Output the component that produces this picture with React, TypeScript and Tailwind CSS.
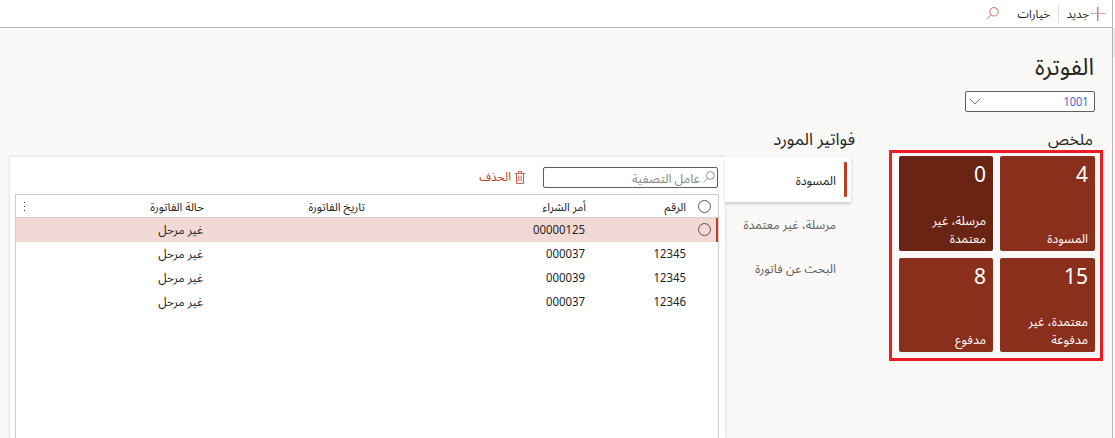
import React from "react";

const tabs = [
  { label: "المسودة", active: true },
  { label: "مرسلة، غير معتمدة", active: false },
  { label: "البحث عن فاتورة", active: false },
];

const tiles = [
  { count: "4", label: "المسودة", tone: "bg-[#8a2f1c]" },
  { count: "0", label: "مرسلة، غير معتمدة", tone: "bg-[#692414]" },
  { count: "15", label: "معتمدة، غير مدفوعة", tone: "bg-[#8a2f1c]" },
  { count: "8", label: "مدفوع", tone: "bg-[#8a2f1c]" },
];

const rows = [
  { number: "", order: "00000125", status: "غير مرحل", selected: true },
  { number: "12345", order: "000037", status: "غير مرحل", selected: false },
  { number: "12345", order: "000039", status: "غير مرحل", selected: false },
  { number: "12346", order: "000037", status: "غير مرحل", selected: false },
];

function SearchIcon({ className }: { className: string }) {
  return (
    <svg viewBox="0 0 13 13" className={className} fill="none" stroke="currentColor" strokeWidth="1">
      <circle cx="8" cy="4.8" r="4.2" />
      <path d="M5.1 7.700 0.5 12.3" />
    </svg>
  );
}

function TrashIcon() {
  return (
    <svg viewBox="0 0 10 13" className="h-[13px] w-[10px]" fill="none" strokeWidth="1">
      <path d="M0 2.500h10M3.5 2.500v-2h3v2M1.5 2.500v10h7v-10" stroke="#bf6350" />
      <path d="M3.5 4.500v6M5 4.500v6M6.500 4.500v6" stroke="#c07a70" strokeWidth="0.8" />
    </svg>
  );
}

function Circle() {
  return <span className="size-[13px] rounded-full border border-[#555]" />;
}

export default function App() {
  return (
    <div
      dir="rtl"
      className="flex h-[438px] w-[1115px] overflow-hidden bg-[#faf9f8] font-['Segoe_UI','Noto_Sans_Arabic','Open_Sans','DejaVu_Sans',sans-serif] text-[12px] whitespace-nowrap text-[#252423]"
    >
      <div className="flex w-[3px] shrink-0 flex-col border-l border-[#b5b5b5]">
        <div className="h-[28px] bg-white" />
        <div className="h-[29px] bg-[#edebe9]" />
      </div>
      <div className="flex w-[1112px] shrink-0 flex-col">
        <header className="flex h-[28px] shrink-0 items-center border-b border-[#b8b8b8] bg-white pr-[7px] text-[11.5px]">
          <svg viewBox="0 0 14 14" className="size-[14px]" strokeWidth="1" fill="none">
            <path d="M7.500 0v14" stroke="#c9c3ec" />
            <path d="M0 6.500h14" stroke="#d3a3a0" />
            <path d="M6.500 0v14" stroke="#d98b33" />
          </svg>
          <span className="mr-[2px] flex w-[30px] pt-[3px]">جديد</span>
          <span className="h-[18px] w-px bg-[#dcdcdc]" />
          <span className="mr-[8px] flex w-[51px] pt-[3px]">خيارات</span>
          <SearchIcon className="size-[13px] text-[#c97464]" />
        </header>

        <div className="flex flex-col pr-[18px]">
          <h1 className="mt-[20px] flex h-[40px] items-center text-[23.400px] leading-[40px]">الفوترة</h1>
          <div className="mt-[3px] mr-[-1px] flex h-[21px] w-[130px] items-center justify-between rounded-[2px] border border-[#605e5c] bg-white pr-[5px] pl-[4px] text-[#4663d0]">
            <span className="origin-right scale-x-[0.880] pt-px text-[12.500px]">1001</span>
            <svg viewBox="0 0 12 7" className="h-[7px] w-[12px] -translate-x-px" fill="none" stroke="#777">
              <path d="m.7.7 5.300 5.300L11.300.7" />
            </svg>
          </div>
        </div>

        <div className="flex flex-1 pr-[9px]">
          <section className="w-[214px] shrink-0">
            <h2 className="mr-[10px] flex h-[38px] items-center pt-[18px] text-[16px]">ملخص</h2>
            <div className="grid h-[211px] grid-cols-[95px_94px] grid-rows-[95px_94px] gap-[7px] border-[3px] border-[#ed1c24] pt-[3px] pr-[5px]">
              {tiles.map((t) => (
                <div key={t.count} className={`flex flex-col justify-between rounded-[2px] pt-[7px] pr-[7px] pb-[3px] pl-[10px] text-white ${t.tone}`}>
                  <span className="text-[21px] leading-[24px]">{t.count}</span>
                  <span className="w-[70px] text-[12.400px] leading-[18px] whitespace-normal">{t.label}</span>
                </div>
              ))}
            </div>
          </section>

          <section className="mr-[33px] w-[846px] shrink-0">
            <h2 className="mr-px flex h-[38px] items-center pt-[18px] text-[16.900px]">فواتير المورد</h2>
            <div className="mt-[7px] flex pr-[5px]">
              <nav className="w-[126px] shrink-0">
                {tabs.map((t) => (
                  <div
                    key={t.label}
                    className={`flex items-center text-[12.300px] ${t.active ? "relative z-10 h-[45px] bg-white pr-[4px] shadow-[0_2px_3px_rgba(0,0,0,0.18)]" : "h-[44px] pr-[15px] text-[#605e5c]"}`}
                  >
                    {t.active && <span className="ml-[8px] h-[35px] w-[3px] rounded-[1px] bg-[#c23c1f]" />}
                    <span className={t.active ? "pt-[4px]" : "pt-[2px]"}>{t.label}</span>
                  </div>
                ))}
              </nav>
              <div className="flex h-[281px] w-[715px] shrink-0 flex-col bg-white pr-[6px] pl-[5px] shadow-[0_0_3px_rgba(0,0,0,0.18)]">
                <div className="flex h-[37px] shrink-0 items-center pt-[4px]">
                  <div className="mr-px flex h-[21px] w-[175px] items-center rounded-[2px] border border-[#605e5c] pr-[2px] text-[#8a8886]">
                    <SearchIcon className="mb-[2px] size-[12px]" />
                    <span className="mr-[3px] pt-[3px] text-[12.400px]">عامل التصفية</span>
                  </div>
                  <div className="mr-[18px] mb-px flex items-center gap-[4px] text-[#bd3f27]">
                    <TrashIcon />
                    <span className="pt-px">الحذف</span>
                  </div>
                </div>
                <div className="flex flex-1 flex-col border border-b-0 border-[#cfcfcf]">
                  <div className="flex h-[23px] shrink-0 items-center border-b border-[#cfcfcf] text-[11.500px]">
                    <span className="flex w-[32px] pr-[7px]"><Circle /></span>
                    <span className="w-[100px] pt-[4px]">الرقم</span>
                    <span className="w-[221px] pt-[4px]">أمر الشراء</span>
                    <span className="w-[161px] pt-[4px]">تاريخ الفاتورة</span>
                    <span className="w-[179px] pt-[4px]">حالة الفاتورة</span>
                    <span className="flex flex-col gap-[3px]">
                      <i className="size-px bg-[#333]" />
                      <i className="size-px bg-[#333]" />
                      <i className="size-px bg-[#333]" />
                    </span>
                  </div>
                  {rows.map((r, i) => (
                    <div key={i} className={`flex h-[24px] shrink-0 items-center ${r.selected ? "border-r-2 border-[#c23c1f] bg-[#f2d9d5]" : "pr-[2px]"}`}>
                      <span className="flex w-[30px] pr-[5px] pb-[2px]">{r.selected && <Circle />}</span>
                      <span className="w-[101px] origin-right scale-x-[0.910] pt-px text-[12.500px]">{r.number}</span>
                      <span className="w-[382px] origin-right scale-x-[0.910] pt-px text-[12.500px]">{r.order}</span>
                      <span className="pt-[2px]">{r.status}</span>
                    </div>
                  ))}
                </div>
              </div>
            </div>
          </section>
        </div>
      </div>
    </div>
  );
}
